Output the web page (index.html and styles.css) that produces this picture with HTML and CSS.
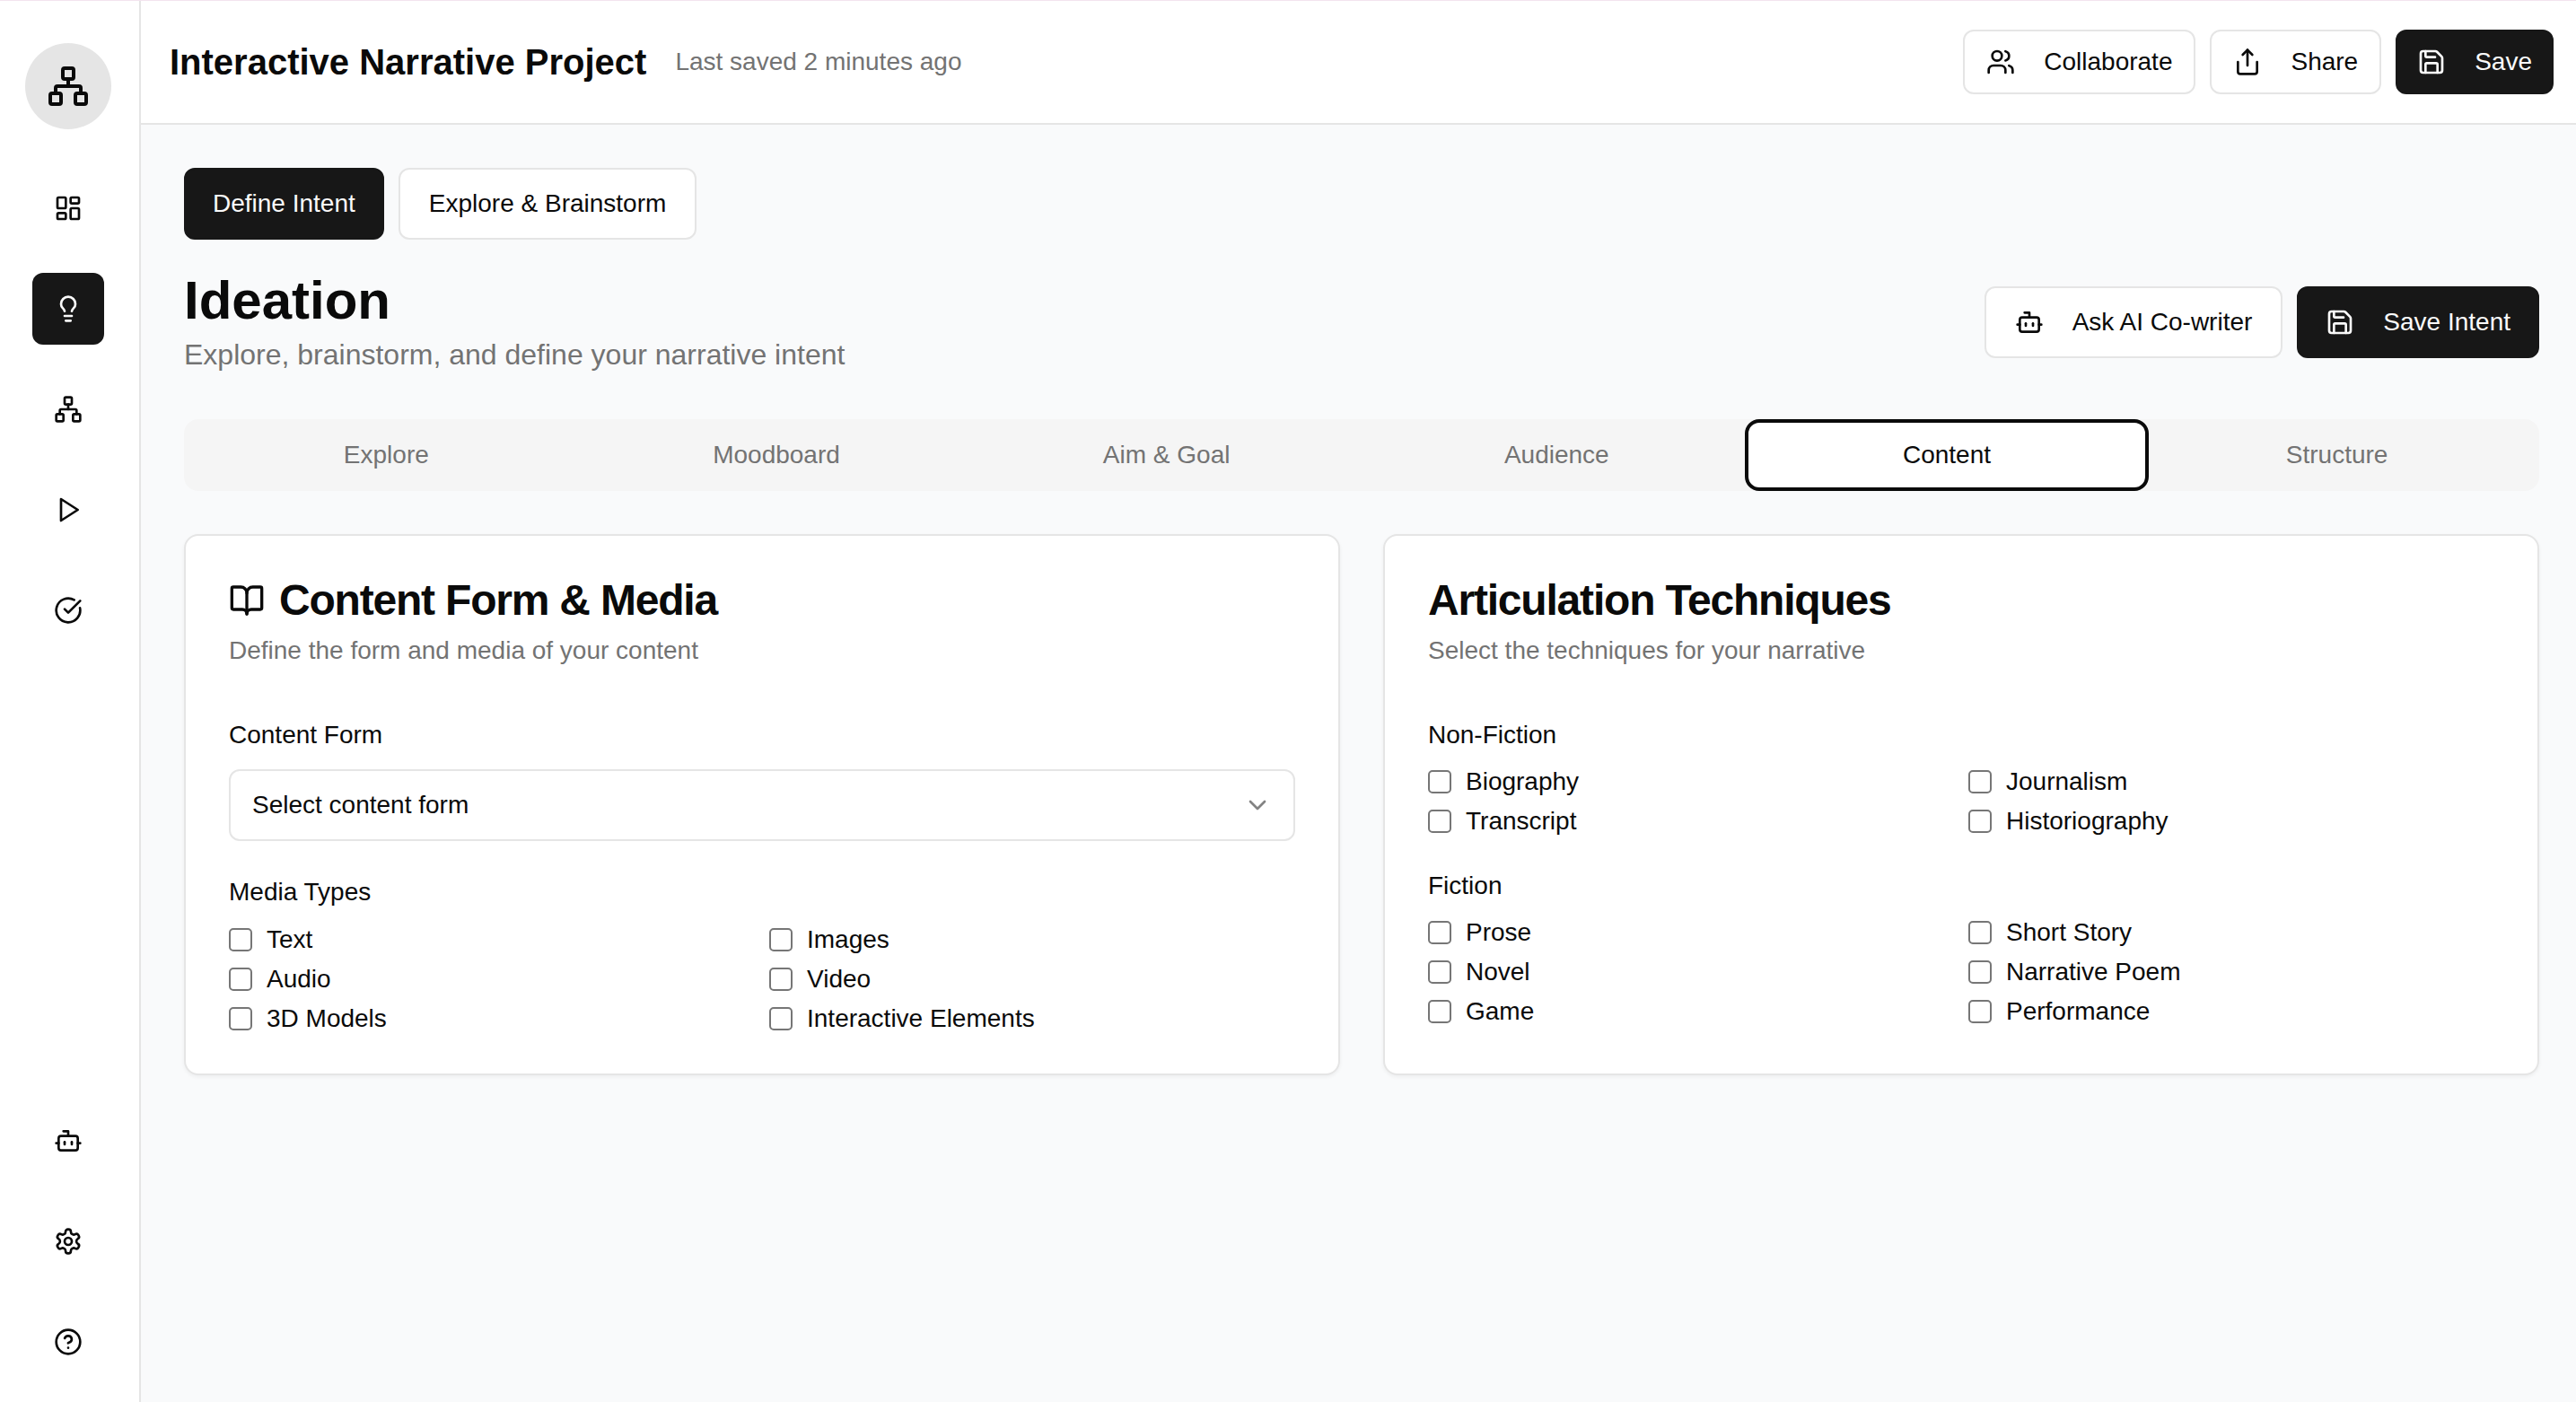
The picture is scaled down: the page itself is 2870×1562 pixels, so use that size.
FILE: index.html
```html
<!DOCTYPE html>
<html lang="en">
<head>
  <meta charset="utf-8">
  <title>Interactive Narrative Project</title>
  <link rel="stylesheet" href="styles.css">
</head>
<body>
  <svg class="icon-defs" xmlns="http://www.w3.org/2000/svg">
    <symbol id="i-network" viewBox="0 0 24 24"><rect x="16" y="16" width="6" height="6" rx="1"/><rect x="2" y="16" width="6" height="6" rx="1"/><rect x="9" y="2" width="6" height="6" rx="1"/><path d="M5 16v-3a1 1 0 0 1 1-1h12a1 1 0 0 1 1 1v3"/><path d="M12 12V8"/></symbol>
    <symbol id="i-dashboard" viewBox="0 0 24 24"><rect x="3" y="3" width="7" height="9" rx="1"/><rect x="14" y="3" width="7" height="5" rx="1"/><rect x="14" y="12" width="7" height="9" rx="1"/><rect x="3" y="16" width="7" height="5" rx="1"/></symbol>
    <symbol id="i-bulb" viewBox="0 0 24 24"><path d="M15 14c.2-1 .7-1.7 1.5-2.5 1-.9 1.5-2.2 1.5-3.5A6 6 0 0 0 6 8c0 1 .2 2.2 1.5 3.5.7.7 1.3 1.5 1.5 2.5"/><path d="M9 18h6"/><path d="M10 22h4"/></symbol>
    <symbol id="i-play" viewBox="0 0 24 24"><polygon points="6 3 20 12 6 21 6 3"/></symbol>
    <symbol id="i-check" viewBox="0 0 24 24"><path d="M21.801 10A10 10 0 1 1 17 3.335"/><path d="m9 11 3 3L22 4"/></symbol>
    <symbol id="i-bot" viewBox="0 0 24 24"><path d="M12 8V4H8"/><rect x="4" y="8" width="16" height="12" rx="2"/><path d="M2 14h2"/><path d="M20 14h2"/><path d="M15 13v2"/><path d="M9 13v2"/></symbol>
    <symbol id="i-settings" viewBox="0 0 24 24"><path d="M12.22 2h-.44a2 2 0 0 0-2 2v.18a2 2 0 0 1-1 1.73l-.43.25a2 2 0 0 1-2 0l-.15-.08a2 2 0 0 0-2.73.73l-.22.38a2 2 0 0 0 .73 2.73l.15.1a2 2 0 0 1 1 1.72v.51a2 2 0 0 1-1 1.74l-.15.09a2 2 0 0 0-.73 2.73l.22.38a2 2 0 0 0 2.73.73l.15-.08a2 2 0 0 1 2 0l.43.25a2 2 0 0 1 1 1.73V20a2 2 0 0 0 2 2h.44a2 2 0 0 0 2-2v-.18a2 2 0 0 1 1-1.73l.43-.25a2 2 0 0 1 2 0l.15.08a2 2 0 0 0 2.73-.73l.22-.39a2 2 0 0 0-.73-2.73l-.15-.08a2 2 0 0 1-1-1.74v-.5a2 2 0 0 1 1-1.74l.15-.09a2 2 0 0 0 .73-2.73l-.22-.38a2 2 0 0 0-2.73-.73l-.15.08a2 2 0 0 1-2 0l-.43-.25a2 2 0 0 1-1-1.73V4a2 2 0 0 0-2-2z"/><circle cx="12" cy="12" r="3"/></symbol>
    <symbol id="i-help" viewBox="0 0 24 24"><circle cx="12" cy="12" r="10"/><path d="M9.09 9a3 3 0 0 1 5.83 1c0 2-3 3-3 3"/><path d="M12 17h.01"/></symbol>
    <symbol id="i-users" viewBox="0 0 24 24"><path d="M16 21v-2a4 4 0 0 0-4-4H6a4 4 0 0 0-4 4v2"/><circle cx="9" cy="7" r="4"/><path d="M22 21v-2a4 4 0 0 0-3-3.87"/><path d="M16 3.13a4 4 0 0 1 0 7.75"/></symbol>
    <symbol id="i-share" viewBox="0 0 24 24"><path d="M4 12v8a2 2 0 0 0 2 2h12a2 2 0 0 0 2-2v-8"/><polyline points="16 6 12 2 8 6"/><line x1="12" y1="2" x2="12" y2="15"/></symbol>
    <symbol id="i-save" viewBox="0 0 24 24"><path d="M15.2 3a2 2 0 0 1 1.4.6l3.8 3.8a2 2 0 0 1 .6 1.4V19a2 2 0 0 1-2 2H5a2 2 0 0 1-2-2V5a2 2 0 0 1 2-2z"/><path d="M17 21v-7a1 1 0 0 0-1-1H8a1 1 0 0 0-1 1v7"/><path d="M7 3v4a1 1 0 0 0 1 1h7"/></symbol>
    <symbol id="i-book" viewBox="0 0 24 24"><path d="M12 7v14"/><path d="M3 18a1 1 0 0 1-1-1V4a1 1 0 0 1 1-1h5a4 4 0 0 1 4 4 4 4 0 0 1 4-4h5a1 1 0 0 1 1 1v13a1 1 0 0 1-1 1h-6a3 3 0 0 0-3 3 3 3 0 0 0-3-3z"/></symbol>
    <symbol id="i-chevron" viewBox="0 0 24 24"><path d="m6 9 6 6 6-6"/></symbol>
  </svg>

  <div class="app">
    <aside class="sidebar">
      <div class="logo"><svg class="icon icon-logo"><use href="#i-network"/></svg></div>
      <nav class="side-nav">
        <a class="side-item"><svg class="icon"><use href="#i-dashboard"/></svg></a>
        <a class="side-item active"><svg class="icon"><use href="#i-bulb"/></svg></a>
        <a class="side-item"><svg class="icon"><use href="#i-network"/></svg></a>
        <a class="side-item"><svg class="icon"><use href="#i-play"/></svg></a>
        <a class="side-item"><svg class="icon"><use href="#i-check"/></svg></a>
      </nav>
      <nav class="side-nav side-bottom">
        <a class="side-item"><svg class="icon"><use href="#i-bot"/></svg></a>
        <a class="side-item"><svg class="icon"><use href="#i-settings"/></svg></a>
        <a class="side-item"><svg class="icon"><use href="#i-help"/></svg></a>
      </nav>
    </aside>

    <div class="page">
      <header class="topbar">
        <div class="topbar-left">
          <span class="project-title">Interactive Narrative Project</span>
          <span class="saved">Last saved 2 minutes ago</span>
        </div>
        <div class="topbar-right">
          <button class="btn"><svg class="icon"><use href="#i-users"/></svg>Collaborate</button>
          <button class="btn"><svg class="icon"><use href="#i-share"/></svg>Share</button>
          <button class="btn btn-dark"><svg class="icon"><use href="#i-save"/></svg>Save</button>
        </div>
      </header>

      <main class="main">
        <div class="mode-switch">
          <button class="btn btn-lg btn-dark">Define Intent</button>
          <button class="btn btn-lg">Explore &amp; Brainstorm</button>
        </div>

        <div class="heading-row">
          <div>
            <h1>Ideation</h1>
            <p class="lead">Explore, brainstorm, and define your narrative intent</p>
          </div>
          <div class="heading-actions">
            <button class="btn btn-lg"><svg class="icon"><use href="#i-bot"/></svg>Ask AI Co-writer</button>
            <button class="btn btn-lg btn-dark"><svg class="icon"><use href="#i-save"/></svg>Save Intent</button>
          </div>
        </div>

        <div class="tabs">
          <div class="tab">Explore</div>
          <div class="tab">Moodboard</div>
          <div class="tab">Aim &amp; Goal</div>
          <div class="tab">Audience</div>
          <div class="tab selected">Content</div>
          <div class="tab">Structure</div>
        </div>

        <div class="cards">
          <section class="card">
            <h2><svg class="icon"><use href="#i-book"/></svg>Content Form &amp; Media</h2>
            <p class="card-sub">Define the form and media of your content</p>

            <div class="field-label first">Content Form</div>
            <div class="select">
              <span>Select content form</span>
              <svg class="icon chevron"><use href="#i-chevron"/></svg>
            </div>

            <div class="field-label media-label">Media Types</div>
            <div class="checks">
              <label class="check"><input type="checkbox">Text</label>
              <label class="check"><input type="checkbox">Images</label>
              <label class="check"><input type="checkbox">Audio</label>
              <label class="check"><input type="checkbox">Video</label>
              <label class="check"><input type="checkbox">3D Models</label>
              <label class="check"><input type="checkbox">Interactive Elements</label>
            </div>
          </section>

          <section class="card">
            <h2>Articulation Techniques</h2>
            <p class="card-sub">Select the techniques for your narrative</p>

            <div class="field-label first">Non-Fiction</div>
            <div class="checks">
              <label class="check"><input type="checkbox">Biography</label>
              <label class="check"><input type="checkbox">Journalism</label>
              <label class="check"><input type="checkbox">Transcript</label>
              <label class="check"><input type="checkbox">Historiography</label>
            </div>

            <div class="field-label fiction-label">Fiction</div>
            <div class="checks">
              <label class="check"><input type="checkbox">Prose</label>
              <label class="check"><input type="checkbox">Short Story</label>
              <label class="check"><input type="checkbox">Novel</label>
              <label class="check"><input type="checkbox">Narrative Poem</label>
              <label class="check"><input type="checkbox">Game</label>
              <label class="check"><input type="checkbox">Performance</label>
            </div>
          </section>
        </div>
      </main>
    </div>
  </div>
</body>
</html>
```

FILE: styles.css
```css
* {
  box-sizing: border-box;
}

html,
body {
  margin: 0;
  height: 100%;
}

body {
  font-family: "Liberation Sans", Arial, sans-serif;
  font-size: 28px;
  color: #0a0a0a;
  background: #fff;
  overflow: hidden;
}

.icon-defs {
  display: none;
}

.icon {
  width: 32px;
  height: 32px;
  flex: none;
  fill: none;
  stroke: currentColor;
  stroke-width: 2;
  stroke-linecap: round;
  stroke-linejoin: round;
}

.app {
  display: flex;
  height: 100%;
  border-top: 1px solid #f3e4ef;
}

/* sidebar */
.sidebar {
  width: 157px;
  flex: none;
  display: flex;
  flex-direction: column;
  align-items: center;
  padding: 47px 3px 27px 0;
  background: #fff;
  border-right: 2px solid #e5e5e5;
}

.logo {
  width: 96px;
  height: 96px;
  border-radius: 50%;
  background: #e5e5e5;
  display: flex;
  align-items: center;
  justify-content: center;
  margin-bottom: 48px;
}

.icon-logo {
  width: 48px;
  height: 48px;
}

.side-nav {
  display: flex;
  flex-direction: column;
  gap: 32px;
}

.side-bottom {
  margin-top: auto;
}

.side-item {
  width: 80px;
  height: 80px;
  border-radius: 12px;
  display: flex;
  align-items: center;
  justify-content: center;
}

.side-item.active {
  background: #171717;
  color: #fafafa;
}

/* top bar */
.page {
  flex: 1;
  min-width: 0;
  display: flex;
  flex-direction: column;
  background: #f9fafb;
}

.topbar {
  height: 138px;
  flex: none;
  display: flex;
  align-items: center;
  justify-content: space-between;
  padding: 0 25px 0 32px;
  background: #fff;
  border-bottom: 2px solid #e5e5e5;
}

.topbar-left {
  display: flex;
  align-items: center;
  gap: 32px;
}

.project-title {
  font-size: 40px;
  font-weight: 700;
}

.saved {
  color: #737373;
}

.topbar-right {
  display: flex;
  gap: 16px;
}

/* buttons */
.btn {
  height: 72px;
  display: inline-flex;
  align-items: center;
  gap: 32px;
  padding: 0 24px;
  font: inherit;
  color: #0a0a0a;
  background: #fff;
  border: 2px solid #e5e5e5;
  border-radius: 12px;
}

.btn-lg {
  height: 80px;
  padding: 0 32px;
}

.btn-dark {
  background: #171717;
  border-color: #171717;
  color: #fafafa;
  padding: 0 22px;
}

.btn-lg.btn-dark {
  padding: 0 30px;
}

/* main */
.main {
  flex: 1;
  padding: 48px 41px 0 48px;
}

.mode-switch {
  display: flex;
  gap: 16px;
  margin-bottom: 32px;
}

.heading-row {
  display: flex;
  align-items: center;
  justify-content: space-between;
  margin-bottom: 48px;
}

h1 {
  margin: 0;
  font-size: 60px;
  line-height: 72px;
  font-weight: 700;
}

.lead {
  margin: 0;
  font-size: 32px;
  line-height: 48px;
  color: #737373;
}

.heading-actions {
  display: flex;
  gap: 16px;
}

/* tabs */
.tabs {
  display: grid;
  grid-template-columns: repeat(6, 1fr);
  height: 80px;
  padding: 8px;
  margin-bottom: 48px;
  border-radius: 16px;
  background: #f5f5f5;
}

.tab {
  display: flex;
  align-items: center;
  justify-content: center;
  border-radius: 8px;
  color: #737373;
}

.tab.selected {
  color: #0a0a0a;
  background: #fff;
  box-shadow: 0 0 0 4px #fff;
  outline: 4px solid #0a0a0a;
  outline-offset: 4px;
}

/* cards */
.cards {
  display: grid;
  grid-template-columns: 1fr 1fr;
  gap: 48px;
}

.card {
  height: 603px;
  padding: 48px;
  background: #fff;
  border: 2px solid #e5e5e5;
  border-radius: 16px;
  box-shadow: 0 2px 4px rgba(0, 0, 0, 0.05);
}

h2 {
  display: flex;
  align-items: center;
  gap: 16px;
  margin: 0;
  font-size: 48px;
  line-height: 48px;
  font-weight: 700;
  letter-spacing: -1.2px;
}

h2 .icon {
  width: 40px;
  height: 40px;
}

.card-sub {
  margin: 12px 0 0;
  line-height: 40px;
  color: #737373;
}

.field-label {
  line-height: 28px;
}

.field-label.first {
  margin-top: 60px;
}

.media-label {
  margin-top: 43px;
}

.fiction-label {
  margin-top: 44px;
}

.select {
  height: 80px;
  margin-top: 24px;
  display: flex;
  align-items: center;
  justify-content: space-between;
  padding: 0 24px;
  background: #fff;
  border: 2px solid #e5e5e5;
  border-radius: 12px;
}

.chevron {
  opacity: 0.5;
}

.checks {
  display: grid;
  grid-template-columns: 1fr 1fr;
  gap: 16px;
  margin-top: 24px;
}

.media-label + .checks {
  margin-top: 25px;
}

.check {
  display: flex;
  align-items: center;
  gap: 16px;
  line-height: 28px;
}

.check input {
  appearance: none;
  width: 26px;
  height: 26px;
  margin: 0;
  flex: none;
  background: #fff;
  border: 2px solid #767676;
  border-radius: 5px;
}
```
